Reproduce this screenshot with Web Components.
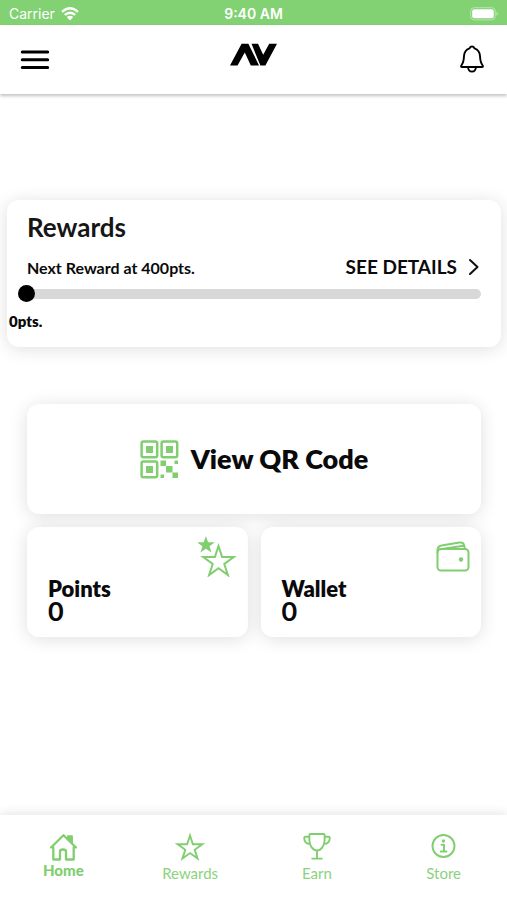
<!DOCTYPE html>
<html lang="en">
<head>
<meta charset="utf-8">
<meta name="viewport" content="width=device-width, initial-scale=1">
<title>Rewards</title>
<style>
  :root { --green: #80ce70; --ink: #0a0a0a; --shadow: 0 2px 18px rgba(0,0,0,.13); }
  body { margin: 0; background: #fff; color: var(--ink); font-family: Lato, "Liberation Sans", sans-serif; }
</style>
</head>
<body>
<av-app></av-app>
<script>
const define = (name, html) => {
  const template = document.createElement('template');
  template.innerHTML = '<style>*{box-sizing:border-box}svg{display:block;flex:none}</style>' + html;
  customElements.define(name, class extends HTMLElement {
    constructor() {
      super();
      this.attachShadow({ mode: 'open' }).append(template.content.cloneNode(true));
    }
  });
};

define('av-status-bar', `
<style>
  :host { display: grid; grid-template-columns: 1fr auto 1fr; align-items: center; height: 25px; padding: 3px 9px 0 9px;
    background: #82d173; color: #fff; font: 14px/20px Inter, "Liberation Sans", sans-serif; }
  .left { display: flex; gap: 6px; align-items: center; }
  .time { font-weight: 600; }
  .battery { justify-self: end; }
</style>
<span class="left"><span>Carrier</span>
  <svg width="18" height="14" viewBox="0 0 18 14" fill="none" stroke="#fff" stroke-width="2.4"><path d="M1 4.8Q9-2.2 17 4.8M3.8 7.9Q9 3.4 14.2 7.9"/><path d="M9 13.4 5.8 10Q9 7.3 12.2 10Z" fill="#fff" stroke="none"/></svg>
</span>
<span class="time">9:40 AM</span>
<svg class="battery" width="28" height="14" viewBox="0 0 28 14"><rect x=".7" y=".7" width="24.6" height="12.2" rx="3.5" fill="none" stroke="#b9e6b0"/><rect x="2.2" y="2.3" width="21.600" height="9" rx="2" fill="#fff"/><path d="M26.500 4.6q3 2.2 0 4.4z" fill="#b9e6b0"/></svg>
`);

define('av-header', `
<style>
  :host { display: flex; justify-content: space-between; align-items: flex-start; height: 69px; padding: 0 20px; background: #fff;
    box-shadow: 0 2px 3px rgba(0,0,0,.24); position: relative; }
  button { border: 0; padding: 0; background: none; width: 30px; height: 69px; display: grid; place-items: center; }
  .bell { padding-bottom: 2px; }
  .logo { margin-top: 18px; }
</style>
<button aria-label="Menu"><svg width="30" height="22" viewBox="0 0 30 22" stroke="#000" stroke-width="3" stroke-linecap="round"><path d="M2.3 3h25.4M2.3 10.7h25.4M2.3 18.4h25.4"/></svg></button>
<svg class="logo" width="48" height="24" viewBox="0 0 48 24" role="img" aria-label="AV"><path d="M0 22.5 11.6.8H18.4L29 22.5H20.8L14.8 9.5 7.5 22.5ZM21.5.8H28L33.2 11.8 39.2.8H47L35.4 22.5H30.4Z"/></svg>
<button class="bell" aria-label="Notifications"><svg width="26" height="30" viewBox="0 0 26 30" fill="none" stroke="#000" stroke-width="1.9" stroke-linejoin="round" stroke-linecap="round"><path d="M13 2.500c1.300 0 2 .7 2.500 1.800 3.500 1.200 5.300 3.700 5.500 7.700.2 5.500 1 7.500 2.700 9.500.5.700.2 1.500-.7 1.500H3c-.9 0-1.200-.8-.7-1.500C4 19.500 4.800 17.500 5 12c.2-4 2-6.500 5.500-7.700C11 3.200 11.700 2.500 13 2.500Z"/><path d="M9 23c.2 3 1.800 4.600 4 4.600s3.800-1.600 4-4.600"/></svg></button>
`);

define('av-card', `
<style>
  :host { display: block; background: #fff; border-radius: 12px; box-shadow: var(--shadow); }
</style><slot></slot>`);

define('av-progress', `
<style>
  :host { display: block; padding: 15px 20px 16px 2px; }
  h2 { margin: 0 0 16px 18px; font-size: 26px; line-height: 24px; font-weight: 700; color: #161616; }
  .row { display: flex; justify-content: space-between; align-items: center; margin-left: 18px; height: 24px; font-weight: 700; }
  label { font-size: 16px; line-height: 20px; padding-top: 2px; }
  a { display: flex; align-items: center; gap: 10px; color: inherit; text-decoration: none; font-size: 19px; line-height: 22px; }
  input { appearance: none; display: block; width: calc(100% - 9px); margin: 6px 0 0 9px; height: 17px; background: none; }
  input::-webkit-slider-runnable-track { height: 10px; border-radius: 5px; background: linear-gradient(90deg, transparent 8px, #d8d8d8 8px); }
  input::-webkit-slider-thumb { appearance: none; width: 17px; height: 17px; margin-top: -4px; border-radius: 50%; background: #000; }
  output { display: block; width: 36px; margin-top: 9px; font-size: 15px; line-height: 20px; font-weight: 800; }
</style>
<h2>Rewards</h2>
<div class="row"><label for="p">Next Reward at 400pts.</label>
<a href="#details">SEE DETAILS <svg width="14" height="18" viewBox="0 0 14 18" fill="none" stroke="#111" stroke-width="2" stroke-linecap="round" stroke-linejoin="round"><path d="m3 2 7.500 7L3 16"/></svg></a></div>
<input id="p" type="range" min="0" max="400" value="0">
<output for="p">0pts.</output>
`);

define('av-qr-button', `
<style>
  :host { display: block; }
  button { display: flex; justify-content: center; align-items: center; gap: 12px; width: 100%; height: 110px; border: 0; padding: 0;
    background: none; color: inherit; font: 800 27px/32px Lato, "Liberation Sans", sans-serif; }
</style>
<button><svg width="39" height="39" viewBox="0 0 39 39" fill="none" stroke="#80ce70" stroke-width="2.500">
  <rect x="1.600" y="1.600" width="15.600" height="15.600" rx="1.800"/><rect x="21.600" y="1.600" width="15.600" height="15.600" rx="1.800"/><rect x="1.600" y="21.600" width="15.600" height="15.600" rx="1.800"/>
  <path stroke="none" fill="#80ce70" d="M6 6h7v7H6zM26 6h7v7h-7zM6 26h7v7H6zM20.500 20.500h5.500v5.500h-5.500zM34.500 20.500h3.500v3.500h-3.500zM26 26h6.500v6.500H26zM20.500 34.500h3.500v3.500h-3.500zM32.500 32.500h5.500v5.500h-5.500z"/></svg><span>View QR Code</span></button>
`);

define('av-stat', `
<style>
  :host { display: flex; justify-content: space-between; height: 110px; padding: 8px 11px 0 21px; font-weight: 800; }
  .text { padding-top: 43px; }
  .label { font-size: 22px; line-height: 22px; }
  .value { font-size: 27px; line-height: 22px; font-weight: 700; }
</style>
<div class="text"><div class="label"><slot name="label"></slot></div><div class="value"><slot></slot></div></div>
<slot name="icon"></slot>
`);

define('av-tabs', `
<style>
  :host { display: block; background: #fff; box-shadow: 0 -1px 10px rgba(0,0,0,.12); position: relative; }
  nav { display: grid; grid-template-columns: repeat(4, 1fr); height: 85px; }
  a { display: flex; flex-direction: column; align-items: center; padding-top: 17px; gap: 1px; color: #8cd27e; text-decoration: none; font-size: 15px; line-height: 20px; }
  a[aria-current] { color: var(--green); font-weight: 900; line-height: 17px; gap: 0; }
  svg { fill: none; stroke: var(--green); stroke-width: 1.900; stroke-linejoin: round; stroke-linecap: round; }
</style>
<nav>
<a href="#home" aria-current="page"><svg width="30" height="30" viewBox="0 0 30 30"><path style="stroke-width:2.300" d="M5.300 15.300V27.500H12V19.500q0-2 3-2t3 2v8h7.700V15.300M3 15.500 15.500 3.300 28 15.500"/><path fill="#80ce70" d="M20 4.300h4v6.800l-4-3.700z"/></svg>Home</a>
<a href="#rewards"><svg width="30" height="30" viewBox="0 0 30 30"><path style="stroke-linejoin:miter" d="m15 3.500 2.900 8.800h9.300l-7.500 5.500 2.900 8.800-7.600-5.500-7.600 5.500 2.900-8.800-7.500-5.500h9.300z"/></svg>Rewards</a>
<a href="#earn"><svg width="30" height="30" viewBox="0 0 30 30"><path d="M8.200 2h13.600q.8 0 .8 1v5.500c0 5-3.500 10-7.600 10s-7.600-5-7.600-10V3q0-1 .8-1ZM15 18.500v7.800M10.200 26.600h9.600M7.400 4.700H3.500q-1.300 0-1.300 1.400c.1 3.900 2.700 5.900 5.900 5.900M22.600 4.700h3.900q1.300 0 1.300 1.400c-.1 3.900-2.700 5.900-5.900 5.900"/></svg>Earn</a>
<a href="#store"><svg width="30" height="30" viewBox="0 0 30 30"><circle cx="14.500" cy="14" r="11"/><path d="M12.500 12.800h2.500v6.700M11.800 19.500h5.700"/><circle cx="14.500" cy="9" r=".7"/></svg>Store</a>
</nav>
`);

define('av-app', `
<style>
  :host { display: flex; flex-direction: column; min-height: 100vh; }
  main { flex: 1; padding: 106px 6px 40px 7px; }
  .grid { display: grid; grid-template-columns: 1fr 1fr; gap: 13px; margin: 57px 20px 0; }
  .wide { grid-column: 1 / -1; }
  .stars, .wallet { fill: none; stroke: var(--green); stroke-width: 2; }
</style>
<av-status-bar></av-status-bar>
<av-header></av-header>
<main>
  <av-card><av-progress></av-progress></av-card>
  <div class="grid">
    <av-card class="wide"><av-qr-button></av-qr-button></av-card>
    <av-card><av-stat><span slot="label">Points</span>0
      <svg slot="icon" class="stars" width="39" height="42" viewBox="0 0 39 42"><path d="m20.500 11 3.600 11.100h11.700l-9.500 6.900 3.600 11.100-9.400-6.900-9.400 6.900 3.600-11.100-9.500-6.900h11.700z"/><path fill="#80ce70" stroke="none" d="m7.900 1 2.200 6.200h6.700l-5.300 4 2 6.300-5.600-3.800-5.500 3.800 2-6.300-5.300-4h6.600z"/></svg></av-stat></av-card>
    <av-card><av-stat><span slot="label">Wallet</span>0
      <svg slot="icon" class="wallet" width="34" height="42" viewBox="0 0 34 42"><rect x="1.500" y="14" width="31" height="21.500" rx="3.500"/><path d="M1.500 18v-3c0-2.800 1.700-4.200 4-4.600l18-2.800c2.700-.4 4 .5 4.500 2.400l1 4M4 14.200 27.500 10.700"/><circle cx="25" cy="24.500" r="2.200" fill="#80ce70" stroke="none"/></svg></av-stat></av-card>
  </div>
</main>
<av-tabs></av-tabs>
`);
</script>
</body>
</html>
